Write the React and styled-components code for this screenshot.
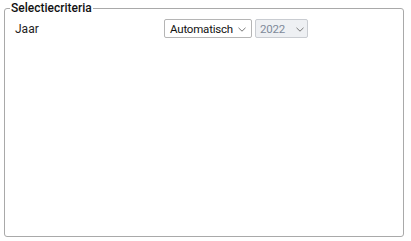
import React from 'react'
import styled, { createGlobalStyle } from 'styled-components'

const Global = createGlobalStyle`
  body {
    margin: 0;
    background: #fff;
    font-family: Roboto, "Liberation Sans", sans-serif;
  }
`

const Chevron = () => (
  <svg width="8" height="5" viewBox="0 0 8 5">
    <path d="M0.5 0.8 L4 4.2 L7.5 0.8" fill="none" stroke="currentColor" strokeWidth="1" />
  </svg>
)

const App = () => {
  return (
    <>
      <Global />
      <Page>
        <Fieldset>
          <Legend>Selectiecriteria</Legend>
          <Row>
            <Label>Jaar</Label>
            <Selects>
              <Select>
                <Value>Automatisch</Value>
                <Arrow><Chevron /></Arrow>
              </Select>
              <Select disabled>
                <Value $w="31px">2022</Value>
                <Arrow><Chevron /></Arrow>
              </Select>
            </Selects>
          </Row>
        </Fieldset>
      </Page>
    </>
  )
}

const Page = styled.div`
  width: 411px;
  height: 241px;
  padding: 1px 7px 4px 4px;
  box-sizing: border-box;
`
const Fieldset = styled.fieldset`
  margin: 0;
  height: 236px;
  box-sizing: border-box;
  border: 1px solid #a9a9a9;
  border-radius: 3px;
  padding: 4px 10px 0 10px;
`
const Legend = styled.legend`
  padding: 0 1px;
  margin-left: -5px;
  font-size: 12px;
  font-weight: 500;
  color: #111;
  line-height: 14px;
`
const Row = styled.div`
  display: flex;
  align-items: center;
`
const Label = styled.div`
  width: 149px;
  font-size: 12px;
  color: #222;
  padding-top: 1px;
`
const Selects = styled.div`
  display: flex;
  gap: 3px;
`
const Select = styled.div`
  height: 19px;
  box-sizing: border-box;
  display: flex;
  align-items: center;
  gap: 5px;
  padding: ${p => (p.disabled ? '0 3px 0 4px' : '0 5px')};
  border: 1px solid ${p => (p.disabled ? '#c9ccd1' : '#b5b5b5')};
  border-radius: 2px;
  background: ${p => (p.disabled ? '#eef0f3' : '#fff')};
  color: ${p => (p.disabled ? '#7f8a9a' : '#111')};
  font-size: 11.5px;
`
const Value = styled.span`
  min-width: ${p => p.$w || 'auto'};
  letter-spacing: -0.2px;
`
const Arrow = styled.div`
  display: flex;
  align-items: center;
  color: #777;
  padding-top: 1px;
`

export default App
